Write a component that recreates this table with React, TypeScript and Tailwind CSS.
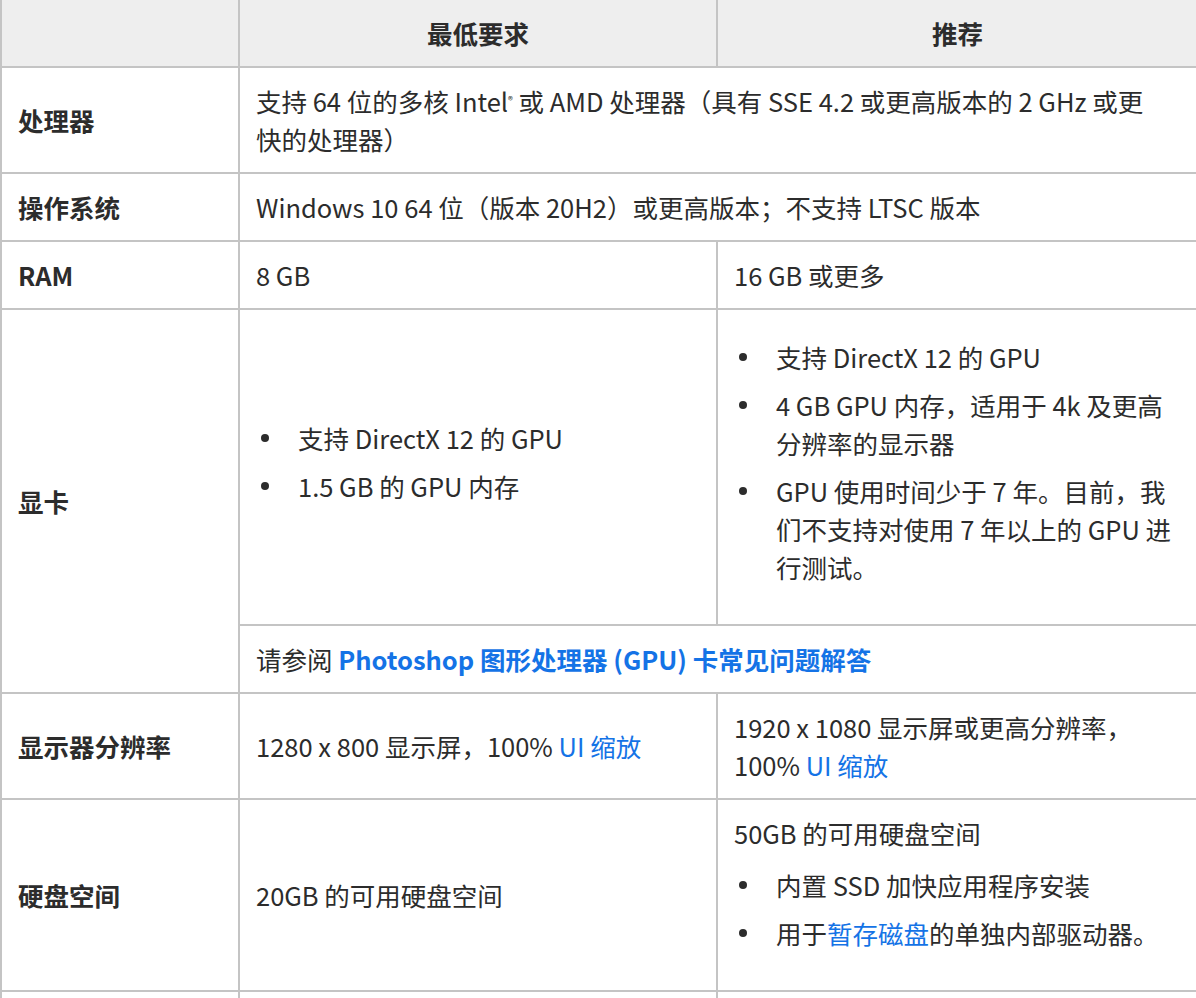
import React from "react";

type Item = React.ReactNode;

function Bullets({ items }: { items: Item[] }): React.JSX.Element {
	return (
		<ul className="my-[14px] flex flex-col">
			{items.map((item, i) => (
				<li key={i} className="mb-[10px] flex">
					<span className="flex h-[38px] w-[42px] shrink-0 items-center pl-[5px]">
						<span className="size-[8px] rounded-full bg-[#2c2c2c]" />
					</span>
					<span>{item}</span>
				</li>
			))}
		</ul>
	);
}

function A({ children, bold }: { children: React.ReactNode; bold?: boolean }): React.JSX.Element {
	return (
		<a href="#" className={bold ? "font-bold text-[#1473e6]" : "text-[#1473e6]"}>
			{children}
		</a>
	);
}

const td = "border-r-2 border-b-2 border-[#c4c4c4] px-4 py-[14px] align-middle";
const th = "border-r-2 border-b-2 border-l-2 border-[#c4c4c4] px-4 py-[14px] align-middle font-bold";

export default function App(): React.JSX.Element {
	return (
		<div className="w-full overflow-hidden bg-white">
			<table className="w-[1199px] table-fixed border-separate border-spacing-0 font-['Noto_Sans_CJK_SC',sans-serif] text-[25.5px] leading-[38px] text-[#2c2c2c]">
				<colgroup>
					<col className="w-[240px]" />
					<col className="w-[478px]" />
					<col className="w-[481px]" />
				</colgroup>
				<thead>
					<tr className="bg-[#eeeeee]">
						<th className={th} />
						<th className={`${td} text-center font-bold`}>最低要求</th>
						<th className={`${td} text-center font-bold`}>推荐</th>
					</tr>
				</thead>
				<tbody>
					<tr>
						<td className={th}>处理器</td>
						<td className={`${td} pr-[34px]`} colSpan={2}>
							支持 64 位的多核 Intel<span className="relative -top-[8px] text-[10px] leading-none">®</span> 或 AMD 处理器（具有 SSE 4.2 或更高版本的 2 GHz 或更快的处理器）
						</td>
					</tr>
					<tr>
						<td className={th}>操作系统</td>
						<td className={td} colSpan={2}>
							Windows 10 64 位（版本 20H2）或更高版本；不支持 LTSC 版本
						</td>
					</tr>
					<tr>
						<td className={th}>RAM</td>
						<td className={td}>8 GB</td>
						<td className={td}>16 GB 或更多</td>
					</tr>
					<tr>
						<td className={th} rowSpan={2}>显卡</td>
						<td className={td}>
							<Bullets items={["支持 DirectX 12 的 GPU", "1.5 GB 的 GPU 内存"]} />
						</td>
						<td className={td}>
							<Bullets
								items={[
									"支持 DirectX 12 的 GPU",
									"4 GB GPU 内存，适用于 4k 及更高分辨率的显示器",
									"GPU 使用时间少于 7 年。目前，我们不支持对使用 7 年以上的 GPU 进行测试。",
								]}
							/>
						</td>
					</tr>
					<tr>
						<td className={td} colSpan={2}>
							请参阅 <A bold>Photoshop 图形处理器 (GPU) 卡常见问题解答</A>
						</td>
					</tr>
					<tr>
						<td className={th}>显示器分辨率</td>
						<td className={td}>
							1280 x 800 显示屏，100% <A>UI 缩放</A>
						</td>
						<td className={td}>
							1920 x 1080 显示屏或更高分辨率，100% <A>UI 缩放</A>
						</td>
					</tr>
					<tr>
						<td className={th}>硬盘空间</td>
						<td className={td}>20GB 的可用硬盘空间</td>
						<td className={td}>
							<p className="mb-[3px]">50GB 的可用硬盘空间</p>
							<Bullets
								items={[
									"内置 SSD 加快应用程序安装",
									<>
										用于<A>暂存磁盘</A>的单独内部驱动器。
									</>,
								]}
							/>
						</td>
					</tr>
					<tr>
						<td className={`${th} h-[40px]`} />
						<td className={td} />
						<td className={td} />
					</tr>
				</tbody>
			</table>
		</div>
	);
}
